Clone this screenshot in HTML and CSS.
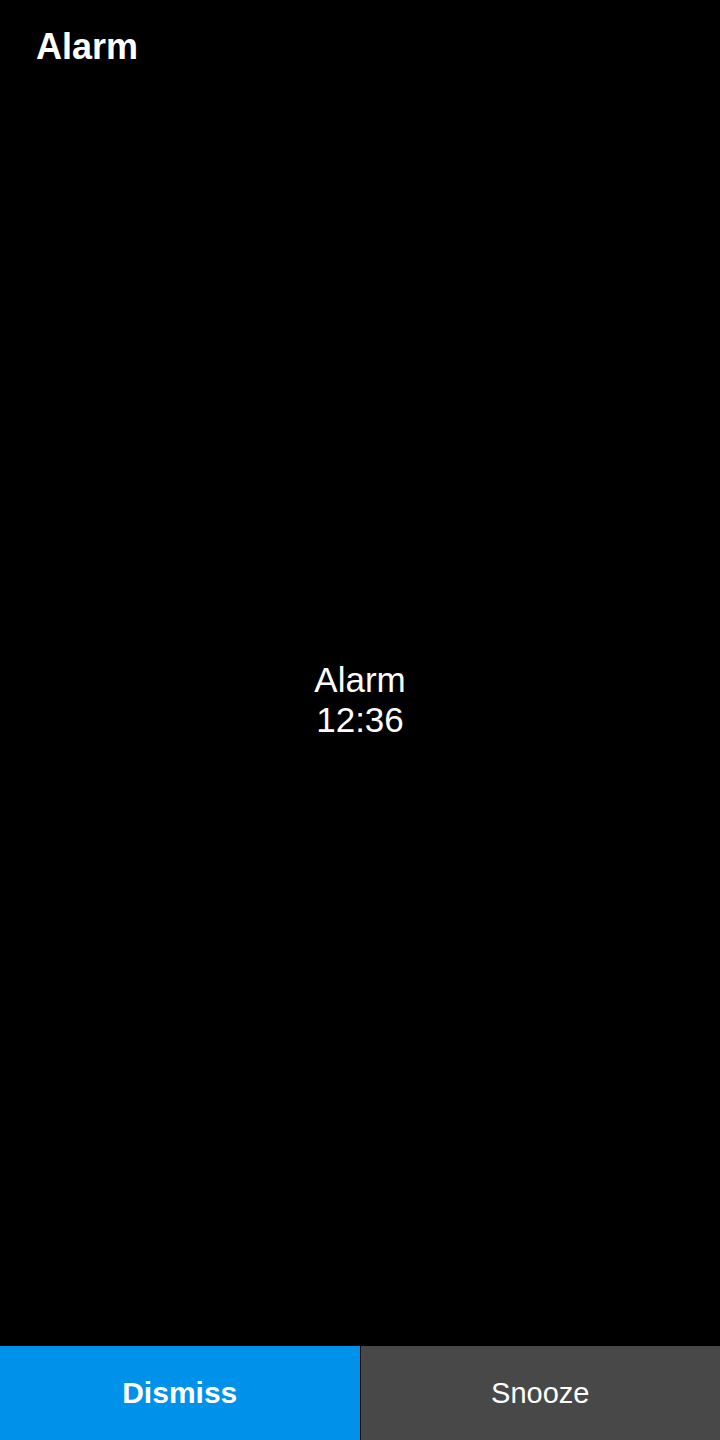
FILE: index.html
```html
<!DOCTYPE html>
<html>
<head>
<meta charset="utf-8">
<link rel="stylesheet" href="styles.css">
</head>
<body>
<div class="screen">
  <header class="title">Alarm</header>
  <main class="center">
    <div class="label">Alarm</div>
    <div class="time">12:36</div>
  </main>
  <footer class="actions">
    <button class="btn dismiss">Dismiss</button>
    <button class="btn snooze">Snooze</button>
  </footer>
</div>
</body>
</html>
```
FILE: styles.css
```css
html, body {
  margin: 0;
  padding: 0;
  background: #000;
}
.screen {
  width: 720px;
  height: 1440px;
  display: flex;
  flex-direction: column;
  font-family: "Liberation Sans", Arial, sans-serif;
  color: #fff;
}
.title {
  font-weight: bold;
  font-size: 36px;
  line-height: 40px;
  padding: 27px 36px 0;
}
.center {
  flex: 1;
  display: flex;
  flex-direction: column;
  align-items: center;
  justify-content: center;
  font-size: 35px;
  line-height: 40px;
  padding-bottom: 14px;
}
.actions {
  display: flex;
  height: 94px;
  gap: 1px;
  background: #000;
}
.btn {
  flex: 1;
  border: none;
  margin: 0;
  padding: 0;
  color: #fff;
  font-family: "Liberation Sans", Arial, sans-serif;
  font-size: 30px;
}
.dismiss {
  background: #0091ea;
  font-weight: bold;
}
.snooze {
  background: #484848;
  font-size: 29px;
}
```
